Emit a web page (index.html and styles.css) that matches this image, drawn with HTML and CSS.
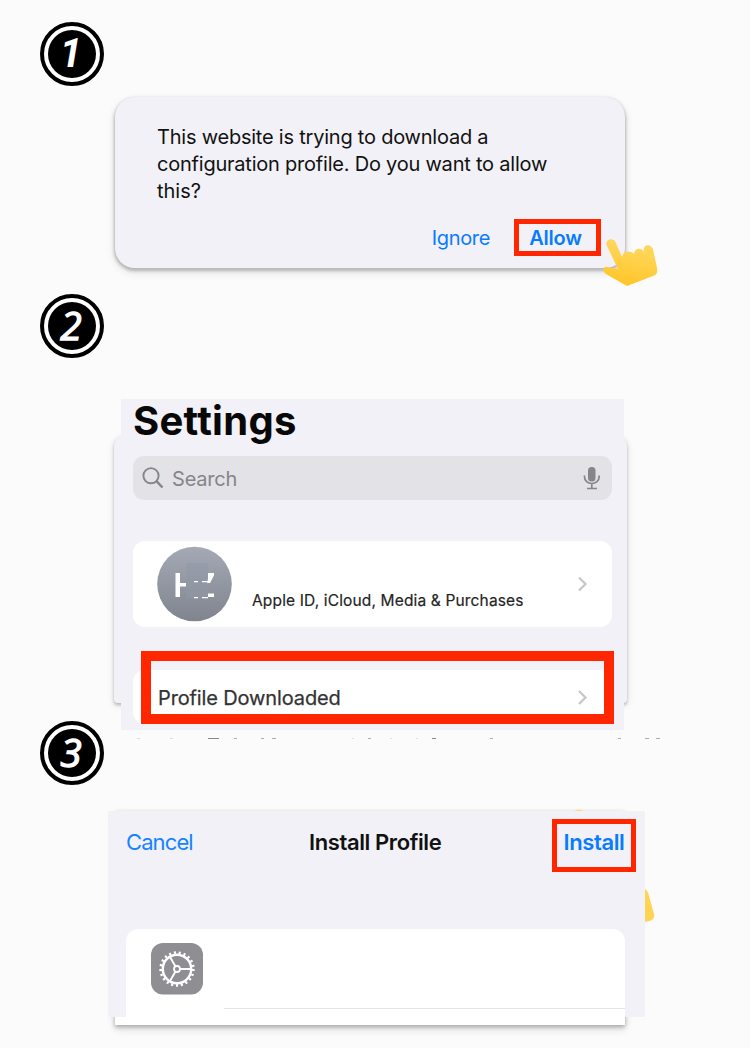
FILE: index.html
```html
<!DOCTYPE html>
<html lang="en">
<head>
<meta charset="utf-8">
<title>Install Profile</title>
<link rel="stylesheet" href="styles.css">
</head>
<body>
<main class="page">
  <section class="step step-one">
    <div class="badge"><span class="digit digit-one">1</span></div>
    <div class="dialog">
      <p class="message"><span class="line line-a">This website is trying to download a</span><span class="line line-b">configuration profile. Do you want to allow</span><span class="line line-c">this?</span></p>
      <div class="actions">
        <span class="ignore">Ignore</span>
        <span class="allow">Allow</span>
      </div>
      <svg class="hand" width="56" height="52" viewBox="0 0 56 52">
        <defs><linearGradient id="skin" x1="0.6" y1="0.2" x2="0.4" y2="1"><stop offset="0" stop-color="#ffd65a"/><stop offset="1" stop-color="#ffc526"/></linearGradient></defs>
        <path fill="url(#skin)" d="M4.500 7C3.500 1 11 -1 13.500 4L20 19C21 13 28 12 32 16C33 9 40 10 41.500 14C41 6 48 5 51 11L55 30C56 35 54 37 51 38L25 48L4 36C0 33 1 28 5 29L16 31Z"/>
      </svg>
    </div>
  </section>
  <section class="step step-two">
    <div class="badge"><span class="digit">2</span></div>
    <div class="backing">
      <div class="settings">
        <h1 class="title">Settings</h1>
        <div class="search">
          <svg width="22" height="22" viewBox="0 0 22 22" fill="none" stroke="#85858a" stroke-width="1.900"><circle cx="9" cy="8.700" r="7.600"/><path d="M14.500 14.200L20.500 20.500" stroke-width="2.400"/></svg>
          <span class="placeholder">Search</span>
          <svg class="mic" width="18" height="24" viewBox="0 0 18 24" fill="none" stroke="#85858a" stroke-width="1.700"><rect x="5" y="1" width="7.500" height="14.500" rx="3.500" fill="#85858a" stroke="none"/><path d="M1.500 9.500V11a7.300 6.500 0 0 0 14.600 0V9.500M8.800 18v4.500M4 22.500h10"/></svg>
        </div>
        <div class="account">
          <svg class="avatar" width="76" height="76" viewBox="0 0 76 76">
            <defs><linearGradient id="grey" x2="0" y2="1"><stop offset="0" stop-color="#a4a9b5"/><stop offset="1" stop-color="#80848f"/></linearGradient></defs>
            <circle cx="38.500" cy="38" r="37.300" fill="url(#grey)"/>
            <path fill="#9298a5" d="M30 17h22v35H30z" opacity=".5"/>
            <path fill="#fff" d="M19.500 27h4.500v10H30v3.500h-6V51h-4.500zM52 27h6v2.500L54 37h-3l1-4zM52 47.500h6v3.500h-6zM38 35h4v1.300H38zM46 35h6v1.300h-6zM38 51h4v1.300H38zM46 51h6v1.300h-6z"/>
          </svg>
          <span class="account-text">Apple ID, iCloud, Media &amp; Purchases</span>
          <svg class="chevron" width="12" height="18" viewBox="0 0 12 18"><path d="M2 2.500l6.500 6.500-6.500 6.500" fill="none" stroke="#c6c6ca" stroke-width="2.200"/></svg>
        </div>
        <div class="profile">
          <div class="profile-mark">
            <span class="profile-text">Profile Downloaded</span>
            <svg class="chevron" width="12" height="18" viewBox="0 0 12 18"><path d="M2 2l6.500 6.500-6.500 6.500" fill="none" stroke="#c6c6ca" stroke-width="2.200"/></svg>
          </div>
        </div>
      </div>
    </div>
    <svg class="clipped-line" width="540" height="1" viewBox="0 0 540 1" stroke="#aaa"><path stroke="#888" d="M88 .5h11M312 .5h4"/><path d="M114 .5h3M141 .5h3M152 .5h4M248 .5h3M370 .5h3M498 .5h3M525 .5h4M536 .5h4"/><path stroke="#ddd" d="M17 .5h3M50 .5h3M232 .5h2M270 .5h2M296 .5h2"/></svg>
  </section>
  <section class="step step-three">
    <div class="badge"><span class="digit">3</span></div>
    <div class="installer">
      <div class="base"></div>
      <svg class="tip" width="14" height="2"><ellipse cx="6" cy="2" rx="4" ry="1.500" fill="#ffdc79"/></svg>
      <svg class="palm" width="10" height="34" viewBox="0 0 10 34"><path fill="#ffd454" d="M0 0C2 1 3 3 4 7L9 25C10 30 7 32 0 33Z"/></svg>
      <div class="sheet">
        <header class="nav">
          <span class="cancel">Cancel</span>
          <span class="nav-title">Install Profile</span>
          <span class="install">Install</span>
        </header>
        <div class="details">
          <svg class="gear" width="52" height="52" viewBox="0 0 52 52" fill="none" stroke="#fff">
            <rect width="52" height="51.500" rx="12" fill="#8e8e93" stroke="none"/>
            <circle cx="26" cy="26" r="16.400" stroke-width="2.600" stroke-dasharray="2.100 2.807"/>
            <circle cx="26" cy="26" r="14.200" stroke-width="2.400"/>
            <circle cx="26" cy="26" r="3" stroke-width="1.800"/>
            <path d="M29 26h11M24.500 23.400L19 13.900M24.500 28.600L19 38.100" stroke-width="1.900"/>
          </svg>
        </div>
      </div>
    </div>
  </section>
</main>
</body>
</html>
```
FILE: styles.css
```css
* { box-sizing: border-box; }
body { margin: 0; background: #fbfbfb; font-family: Inter, sans-serif; color: #111; }
.page { width: 750px; height: 1048px; overflow: hidden; padding: 22px 0 0 40px; }
.step-one { height: 272px; }
.step-two { height: 427px; }
.step-three { height: 305px; }
.badge { width: 64px; height: 64px; border-radius: 50%; border: 4px solid #000; background: #fff; padding: 4px; display: flex; }
.digit { flex: 1; border-radius: 50%; background: #000; color: #fff; font: italic 400 39px/46px "Open Sans", sans-serif; text-align: center; padding-right: 2px; -webkit-text-stroke: 1.3px #fff; }
.digit-one { font: italic 700 40px/47px Roboto, sans-serif; -webkit-text-stroke: 0; }
.dialog { position: relative; width: 510px; height: 171px; margin: 11px 0 0 75px; padding: 27px 24px 0 42px; border-radius: 20px; background: #f2f1f7; box-shadow: 0 2px 3px 1px #b9b9bb, 0 4px 9px #ddd; }
.message { margin: 0; font-size: 20px; line-height: 27px; }
.line { display: block; white-space: nowrap; }
.line-a { letter-spacing: -.22px; }
.line-b { letter-spacing: -.22px; }
.actions { display: flex; justify-content: flex-end; align-items: center; margin-top: 14px; gap: 24px; height: 37px; font-size: 20px; color: #087cff; }
.ignore { letter-spacing: -.35px; }
.allow { width: 87px; height: 37px; border: 5px solid #ff2600; font-weight: 600; line-height: 28px; text-align: center; padding-right: 4px; letter-spacing: -.2px; }
.hand { position: absolute; left: 487px; top: 141px; }
.backing { width: 513px; height: 268px; margin: 77px 0 0 74px; background: #f2f1f7; border-radius: 12px 12px 4px 4px; box-shadow: 0 2px 3px #bbb, 0 2px 7px #ddd; padding: 0 0 0 7px; }
.settings { position: relative; top: -36px; width: 503px; height: 331px; background: #f2f1f7; padding: 0 12px; }
.title { margin: 0; height: 57px; font-size: 40px; line-height: 43px; letter-spacing: .3px; color: #080808; }
.search { height: 44px; border-radius: 11px; background: #e3e2e7; display: flex; align-items: center; padding: 0 11px 0 9px; }
.placeholder { font-size: 20px; color: #85858a; margin-left: 8px; line-height: 44px; padding-top: 1px; letter-spacing: -.2px; }
.mic { margin-left: auto; }
.account { height: 86px; margin-top: 41px; border-radius: 12px; background: #fff; display: flex; align-items: center; padding: 0 23px; }
.account-text { font-size: 15.5px; letter-spacing: .15px; color: #222; margin: 32px 0 0 20px; white-space: nowrap; -webkit-text-stroke: .2px #333; }
.chevron { margin-left: auto; }
.profile { height: 54px; margin-top: 43px; border-radius: 12px; background: #fff; }
.profile-mark { position: relative; top: -19px; left: 8px; width: 473px; height: 73px; border: 10px solid #ff2600; display: flex; align-items: center; padding: 20px 15px 0 7px; }
.profile-text { font-size: 20px; letter-spacing: -.13px; color: #333; -webkit-text-stroke: .25px #333; white-space: nowrap; }
.clipped-line { display: block; margin: 35px 0 0 80px; }
.installer { position: relative; margin: 26px 0 0 68px; width: 537px; height: 214px; }
.base { position: absolute; left: 7px; top: 0; width: 510px; height: 214px; background: #fff; box-shadow: 0 2px 4px #a9a9a9, 0 4px 8px #ddd; }
.tip { position: absolute; left: 465px; top: -2px; }
.palm { position: absolute; left: 537px; top: 78px; }
.sheet { position: relative; height: 206px; background: #f2f1f7; padding: 8px 9px 0 18px; }
.nav { display: grid; grid-template-columns: 183px 1fr 84px; height: 110px; font-size: 22px; line-height: 46px; }
.cancel { color: #1683ff; letter-spacing: -.9px; }
.nav-title { font-weight: 600; letter-spacing: -.4px; }
.install { height: 53px; border: 5px solid #ff2600; color: #087cff; font-weight: 600; line-height: 36px; text-align: center; letter-spacing: -.4px; }
.details { width: 499px; height: 88px; border-radius: 12px 12px 0 0; background: linear-gradient(#e4e4e7, #e4e4e7) 98px 79px / 401px 1px no-repeat #fff; padding: 14px 25px; }
```
